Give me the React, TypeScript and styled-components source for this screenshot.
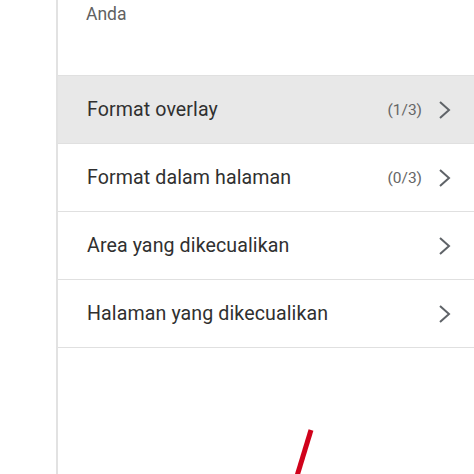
import React from 'react';
import styled, { createGlobalStyle } from 'styled-components';

const GlobalStyle = createGlobalStyle`
  html, body {
    margin: 0;
    padding: 0;
    background: #ffffff;
    font-family: Roboto, "Noto Sans", Arial, sans-serif;
  }
`;

const Page = styled.div`
  display: flex;
  width: 474px;
  height: 474px;
  overflow: hidden;
  position: relative;
  background: #ffffff;
`;

const Gutter = styled.div`
  width: 56px;
  flex-shrink: 0;
  border-right: 2px solid #e2e2e2;
`;

const Panel = styled.div`
  flex: 1;
  display: flex;
  flex-direction: column;
`;

const Header = styled.div`
  height: 76px;
  box-sizing: border-box;
  padding: 3px 0 0 28px;
  font-size: 17.5px;
  line-height: 22px;
  color: #616161;
  border-bottom: 1px solid #e0e0e0;
`;

const Row = styled.div<{ $active?: boolean }>`
  height: 68px;
  box-sizing: border-box;
  display: flex;
  align-items: center;
  padding: 0 22px 0 29px;
  border-bottom: 1px solid #e0e0e0;
  background: ${({ $active }) => ($active ? '#e8e8e8' : '#ffffff')};
`;

const Label = styled.div`
  flex: 1;
  font-size: 19.6px;
  color: #303030;
  letter-spacing: 0.1px;
`;

const Count = styled.div`
  font-size: 15.5px;
  color: #666666;
  margin-right: 16px;
`;

const Chevron = () => (
  <svg width="14" height="20" viewBox="0 0 14 20">
    <polyline points="2,2 11,10 2,18" fill="none" stroke="#5f6368" strokeWidth="2" />
  </svg>
);

const Mark = styled.svg`
  position: absolute;
  left: 290px;
  top: 426px;
`;

const items = [
  { label: 'Format overlay', count: '(1/3)', active: true },
  { label: 'Format dalam halaman', count: '(0/3)' },
  { label: 'Area yang dikecualikan' },
  { label: 'Halaman yang dikecualikan' },
];

export default function App() {
  return (
    <Page>
      <GlobalStyle />
      <Gutter />
      <Panel>
        <Header>Anda</Header>
        {items.map((item) => (
          <Row key={item.label} $active={item.active}>
            <Label>{item.label}</Label>
            {item.count && <Count>{item.count}</Count>}
            <Chevron />
          </Row>
        ))}
      </Panel>
      <Mark width="30" height="50" viewBox="0 0 30 50">
        <line x1="21" y1="4" x2="7" y2="50" stroke="#d0021b" strokeWidth="5" />
      </Mark>
    </Page>
  );
}
